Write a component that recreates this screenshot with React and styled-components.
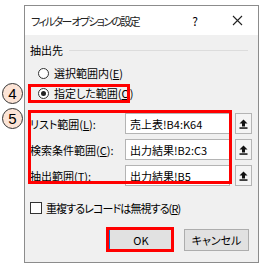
import React from "react";
import styled, { createGlobalStyle } from "styled-components";

const GlobalStyle = createGlobalStyle`
  html, body {
    margin: 0;
    padding: 0;
    background: #fff;
  }
  body {
    font-family: "Noto Sans CJK JP", "Noto Sans", sans-serif;
    font-size: 11px;
    color: #000;
    font-feature-settings: "palt";
  }
`;

const Page = styled.div`
  position: relative;
  width: 263px;
  height: 269px;
  padding: 5px 0 0 24px;
  box-sizing: border-box;
`;

const Dialog = styled.div`
  width: 235px;
  height: 258px;
  border: 1px solid #8c8c8c;
  box-sizing: border-box;
  display: flex;
  flex-direction: column;
  background: #f0f0f0;
`;

const TitleBar = styled.div`
  height: 29px;
  background: #fff;
  display: flex;
  align-items: center;
  padding-left: 6px;
`;

const TitleText = styled.div`
  flex: 1;
  font-size: 11px;
  letter-spacing: -1.7px;
  color: #222;
`;

const HelpMark = styled.div`
  width: 30px;
  text-align: center;
  font-size: 12px;
  margin-right: 7px;
`;

const CloseMark = styled.div`
  width: 41px;
  display: flex;
  justify-content: center;
`;

const Body = styled.div`
  flex: 1;
  display: flex;
  flex-direction: column;
  padding: 0 6px 0 5px;
`;

const GroupHeader = styled.div`
  height: 16px;
  margin-top: 7px;
  display: flex;
  align-items: center;
  gap: 6px;
  &::after {
    content: "";
    flex: 1;
    height: 1px;
    background: #dcdcdc;
    margin-right: 4px;
  }
`;

const RadioList = styled.div`
  margin-top: 5px;
  padding-left: 8px;
  display: flex;
  flex-direction: column;
`;

const OptionRow = styled.label`
  height: 20px;
  display: flex;
  align-items: center;
  gap: 5px;
`;

const RadioDot = styled.span`
  width: 11px;
  height: 11px;
  border-radius: 50%;
  border: 1px solid #333;
  background: #fff;
  box-sizing: border-box;
  display: flex;
  align-items: center;
  justify-content: center;
  &::after {
    content: "";
    width: 5px;
    height: 5px;
    border-radius: 50%;
    background: ${(p) => (p.checked ? "#222" : "transparent")};
  }
`;

const FieldGrid = styled.div`
  margin-top: 10px;
  display: grid;
  grid-template-columns: 90px 105px 17px;
  column-gap: 5px;
  row-gap: 5px;
  grid-auto-rows: 21px;
  align-items: center;
`;

const FieldLabel = styled.div`
  white-space: nowrap;
`;

const FieldInput = styled.div`
  height: 21px;
  box-sizing: border-box;
  background: #fff;
  border: 1px solid #b4b4b4;
  padding-left: 4px;
  display: flex;
  align-items: center;
  white-space: nowrap;
`;

const PickButton = styled.div`
  height: 21px;
  box-sizing: border-box;
  border: 1px solid #b4b4b4;
  background: #f4f4f4;
  display: flex;
  align-items: center;
  justify-content: center;
`;

const CheckRow = styled.label`
  margin-top: 14px;
  height: 16px;
  display: flex;
  align-items: center;
  gap: 4px;
`;

const CheckText = styled.span`
  letter-spacing: -0.9px;
`;

const CheckBox = styled.span`
  width: 12px;
  height: 12px;
  border: 1px solid #333;
  background: #fff;
  box-sizing: border-box;
`;

const ButtonRow = styled.div`
  margin-top: 13px;
  display: flex;
  justify-content: flex-end;
  gap: 11px;
  padding-right: 3px;
`;

const Button = styled.div`
  width: ${(p) => p.w}px;
  height: 22px;
  box-sizing: border-box;
  background: #e1e1e1;
  border: 1px solid ${(p) => (p.primary ? "#0078d7" : "#adadad")};
  display: flex;
  align-items: center;
  justify-content: center;
  font-size: 11px;
`;

const Marker = styled.div`
  position: absolute;
  left: ${(p) => p.x}px;
  top: ${(p) => p.y}px;
  width: ${(p) => p.w}px;
  height: ${(p) => p.h}px;
  border: 3px solid #f00;
  box-sizing: border-box;
  pointer-events: none;
`;

const StepBadge = styled.div`
  position: absolute;
  left: 2px;
  top: ${(p) => p.y}px;
  width: 21px;
  height: 21px;
  border-radius: 50%;
  border: 1px solid #333;
  background: #fce4d6;
  box-sizing: border-box;
  display: flex;
  align-items: center;
  justify-content: center;
  font-family: "Liberation Sans", Arial, sans-serif;
  font-size: 15px;
`;

const CloseIcon = () => (
  <svg width="11" height="11" viewBox="0 0 11 11">
    <path d="M1 1L10 10M10 1L1 10" stroke="#222" strokeWidth="1.1" />
  </svg>
);

const PickIcon = () => (
  <svg width="9" height="10" viewBox="0 0 9 10">
    <path d="M4.5 0.5L8.5 4.5H6V7.5H3V4.5H0.5Z" fill="#111" />
    <rect x="0.5" y="8.3" width="8" height="1.5" fill="#111" />
  </svg>
);

const fields = [
  { label: "リスト範囲(", key: "L", value: "売上表!B4:K64" },
  { label: "検索条件範囲(", key: "C", value: "出力結果!B2:C3" },
  { label: "抽出範囲(", key: "T", value: "出力結果!B5" },
];

export default function App() {
  return (
    <>
      <GlobalStyle />
      <Page>
        <Dialog>
          <TitleBar>
            <TitleText>フィルター オプションの設定</TitleText>
            <HelpMark>?</HelpMark>
            <CloseMark>
              <CloseIcon />
            </CloseMark>
          </TitleBar>
          <Body>
            <GroupHeader>抽出先</GroupHeader>
            <RadioList>
              <OptionRow>
                <RadioDot />
                <span>
                  選択範囲内(<u>E</u>)
                </span>
              </OptionRow>
              <OptionRow>
                <RadioDot checked />
                <span>
                  指定した範囲(<u>O</u>)
                </span>
              </OptionRow>
            </RadioList>
            <FieldGrid>
              {fields.map((f) => (
                <React.Fragment key={f.key}>
                  <FieldLabel>
                    {f.label}
                    <u>{f.key}</u>):
                  </FieldLabel>
                  <FieldInput>{f.value}</FieldInput>
                  <PickButton>
                    <PickIcon />
                  </PickButton>
                </React.Fragment>
              ))}
            </FieldGrid>
            <CheckRow>
              <CheckBox />
              <CheckText>
                重複するレコードは無視する(<u>R</u>)
              </CheckText>
            </CheckRow>
            <ButtonRow>
              <Button w={64} primary>
                OK
              </Button>
              <Button w={65}>キャンセル</Button>
            </ButtonRow>
          </Body>
        </Dialog>
        <Marker x={28} y={84} w={102} h={19} />
        <Marker x={28} y={110} w={204} h={74} />
        <Marker x={106} y={227} w={68} h={25} />
        <StepBadge y={83}>4</StepBadge>
        <StepBadge y={108}>5</StepBadge>
      </Page>
    </>
  );
}
